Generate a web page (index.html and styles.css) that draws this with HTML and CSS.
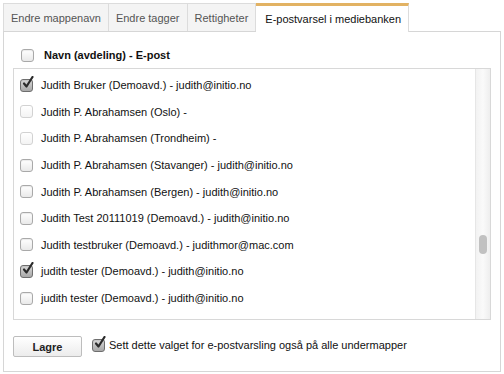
FILE: index.html
```html
<!DOCTYPE html>
<html>
<head>
<meta charset="utf-8">
<link rel="stylesheet" href="styles.css">
</head>
<body>
<div class="wrap">
  <ul class="tabs">
    <li class="tab">Endre mappenavn</li>
    <li class="tab">Endre tagger</li>
    <li class="tab">Rettigheter</li>
    <li class="tab active">E-postvarsel i mediebanken</li>
  </ul>
  <div class="panel">
    <div class="head">
      <span class="cb"></span>
      <span class="head-label">Navn (avdeling) - E-post</span>
    </div>
    <div class="list">
      <div class="rows">
        <div class="row"><span class="cb checked"><svg viewBox="0 0 14 14" width="14" height="14"><path d="M3 7.5 L5.5 10.5 L11.5 1" fill="none" stroke="#2b2b2b" stroke-width="2.2" stroke-linecap="round" stroke-linejoin="round"/></svg></span><span>Judith Bruker (Demoavd.) - judith@initio.no</span></div>
        <div class="row"><span class="cb disabled"></span><span>Judith P. Abrahamsen (Oslo) -</span></div>
        <div class="row"><span class="cb disabled"></span><span>Judith P. Abrahamsen (Trondheim) -</span></div>
        <div class="row"><span class="cb"></span><span>Judith P. Abrahamsen (Stavanger) - judith@initio.no</span></div>
        <div class="row"><span class="cb"></span><span>Judith P. Abrahamsen (Bergen) - judith@initio.no</span></div>
        <div class="row"><span class="cb"></span><span>Judith Test 20111019 (Demoavd.) - judith@initio.no</span></div>
        <div class="row"><span class="cb"></span><span>Judith testbruker (Demoavd.) - judithmor@mac.com</span></div>
        <div class="row"><span class="cb checked"><svg viewBox="0 0 14 14" width="14" height="14"><path d="M3 7.5 L5.5 10.5 L11.5 1" fill="none" stroke="#2b2b2b" stroke-width="2.2" stroke-linecap="round" stroke-linejoin="round"/></svg></span><span>judith tester (Demoavd.) - judith@initio.no</span></div>
        <div class="row"><span class="cb"></span><span>judith tester (Demoavd.) - judith@initio.no</span></div>
      </div>
      <div class="scroll"><div class="thumb"></div></div>
    </div>
    <div class="foot">
      <button class="btn">Lagre</button>
      <label class="opt"><span class="cb checked"><svg viewBox="0 0 14 14" width="14" height="14"><path d="M3 7.5 L5.5 10.5 L11.5 1" fill="none" stroke="#2b2b2b" stroke-width="2.2" stroke-linecap="round" stroke-linejoin="round"/></svg></span><span>Sett dette valget for e-postvarsling også på alle undermapper</span></label>
    </div>
  </div>
</div>
</body>
</html>
```

FILE: styles.css
```css
html, body {
  margin: 0;
  padding: 0;
  background: #fff;
}
body {
  font-family: "Liberation Sans", Arial, Helvetica, sans-serif;
  font-size: 11px;
  color: #111;
}
.wrap {
  padding: 3px 3px 0 3px;
}
.tabs {
  list-style: none;
  margin: 0;
  padding: 0;
  display: flex;
  align-items: flex-start;
  height: 28px;
}
.tab {
  height: 28px;
  box-sizing: border-box;
  padding: 0 7px;
  display: flex;
  align-items: center;
  background: #f4f4f4;
  color: #555;
  border: 1px solid #dcdcdc;
  border-bottom: none;
  border-left: none;
  font-size: 11px;
}
.tab:first-child {
  border-left: 1px solid #dcdcdc;
}
.tab.active {
  height: 29px;
  background: #fff;
  color: #111;
  border-top: 3px solid #e2b263;
  padding: 0 7px 0 9px;
  position: relative;
  z-index: 1;
}
.panel {
  border: 1px solid #d6d6d6;
  height: 341px;
  box-sizing: border-box;
  padding: 16px 9px 0 9px;
}
.head {
  display: flex;
  align-items: center;
  gap: 10px;
  padding-left: 8px;
  height: 14px;
}
.head-label {
  font-weight: bold;
}
.cb {
  width: 11px;
  height: 11px;
  border: 1px solid #a9a9a9;
  border-radius: 3px;
  background: linear-gradient(#ffffff, #e9e9e9);
  flex: none;
  position: relative;
  box-shadow: inset 0 1px 1px rgba(0,0,0,0.08);
}
.cb.disabled {
  border-color: #d2d2d2;
  background: linear-gradient(#ffffff, #f3f3f3);
  box-shadow: none;
}
.cb.checked {
  border-color: #6e6e6e;
  background: linear-gradient(#d8d8d8, #a8a8a8);
}
.cb svg {
  position: absolute;
  left: 0;
  top: -4px;
}
.list {
  margin-top: 6px;
  border: 1px solid #d8d8d8;
  height: 250px;
  display: flex;
}
.rows {
  flex: 1;
  padding-top: 3px;
}
.row {
  height: 26.6px;
  display: flex;
  align-items: center;
  gap: 8px;
  padding-left: 6px;
}
.scroll {
  width: 14px;
  border-left: 1px solid #e6e6e6;
  background: linear-gradient(to right, #f2f2f2, #fafafa 50%, #eeeeee);
  position: relative;
}
.thumb {
  position: absolute;
  left: 3px;
  top: 166px;
  width: 8px;
  height: 19px;
  border-radius: 4px;
  background: #c1c1c1;
}
.foot {
  display: flex;
  align-items: center;
  margin-top: 16px;
  gap: 10px;
}
.btn {
  width: 69px;
  height: 21px;
  border: 1px solid #bdbdbd;
  border-radius: 2px;
  background: linear-gradient(#ffffff, #ececec);
  font-family: "Liberation Sans", Arial, sans-serif;
  font-size: 11px;
  font-weight: bold;
  color: #222;
  padding: 0;
}
.opt {
  display: flex;
  align-items: center;
  gap: 4px;
  margin-top: -3px;
}
```
